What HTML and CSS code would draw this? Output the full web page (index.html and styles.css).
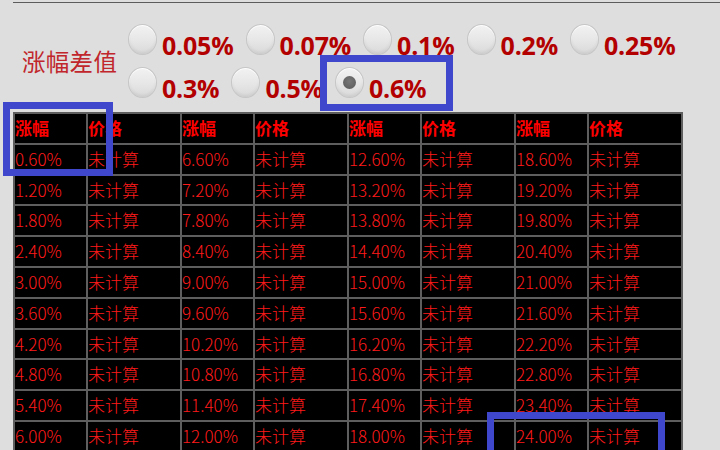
FILE: index.html
```html
<!DOCTYPE html>
<html lang="zh-CN">
<head>
<meta charset="utf-8">
<title>涨幅差值</title>
<link rel="stylesheet" href="styles.css">
</head>
<body>
<div class="topline"></div>
<div class="header">
  <div class="title">涨幅差值</div>
  <div class="radios">
    <label class="radio"><span class="dot"></span><span class="rlabel">0.05%</span></label>
    <label class="radio"><span class="dot"></span><span class="rlabel">0.07%</span></label>
    <label class="radio"><span class="dot"></span><span class="rlabel">0.1%</span></label>
    <label class="radio"><span class="dot"></span><span class="rlabel">0.2%</span></label>
    <label class="radio"><span class="dot"></span><span class="rlabel">0.25%</span></label>
    <label class="radio"><span class="dot"></span><span class="rlabel">0.3%</span></label>
    <label class="radio"><span class="dot"></span><span class="rlabel">0.5%</span></label>
    <label class="radio"><span class="dot checked"></span><span class="rlabel">0.6%</span></label>
  </div>
</div>
<div class="grid">
  <div class="c h">涨幅</div><div class="c h">价格</div><div class="c h">涨幅</div><div class="c h">价格</div><div class="c h">涨幅</div><div class="c h">价格</div><div class="c h">涨幅</div><div class="c h">价格</div>
  <div class="c">0.60%</div><div class="c">未计算</div><div class="c">6.60%</div><div class="c">未计算</div><div class="c">12.60%</div><div class="c">未计算</div><div class="c">18.60%</div><div class="c">未计算</div>
  <div class="c">1.20%</div><div class="c">未计算</div><div class="c">7.20%</div><div class="c">未计算</div><div class="c">13.20%</div><div class="c">未计算</div><div class="c">19.20%</div><div class="c">未计算</div>
  <div class="c">1.80%</div><div class="c">未计算</div><div class="c">7.80%</div><div class="c">未计算</div><div class="c">13.80%</div><div class="c">未计算</div><div class="c">19.80%</div><div class="c">未计算</div>
  <div class="c">2.40%</div><div class="c">未计算</div><div class="c">8.40%</div><div class="c">未计算</div><div class="c">14.40%</div><div class="c">未计算</div><div class="c">20.40%</div><div class="c">未计算</div>
  <div class="c">3.00%</div><div class="c">未计算</div><div class="c">9.00%</div><div class="c">未计算</div><div class="c">15.00%</div><div class="c">未计算</div><div class="c">21.00%</div><div class="c">未计算</div>
  <div class="c">3.60%</div><div class="c">未计算</div><div class="c">9.60%</div><div class="c">未计算</div><div class="c">15.60%</div><div class="c">未计算</div><div class="c">21.60%</div><div class="c">未计算</div>
  <div class="c">4.20%</div><div class="c">未计算</div><div class="c">10.20%</div><div class="c">未计算</div><div class="c">16.20%</div><div class="c">未计算</div><div class="c">22.20%</div><div class="c">未计算</div>
  <div class="c">4.80%</div><div class="c">未计算</div><div class="c">10.80%</div><div class="c">未计算</div><div class="c">16.80%</div><div class="c">未计算</div><div class="c">22.80%</div><div class="c">未计算</div>
  <div class="c">5.40%</div><div class="c">未计算</div><div class="c">11.40%</div><div class="c">未计算</div><div class="c">17.40%</div><div class="c">未计算</div><div class="c">23.40%</div><div class="c">未计算</div>
  <div class="c">6.00%</div><div class="c">未计算</div><div class="c">12.00%</div><div class="c">未计算</div><div class="c">18.00%</div><div class="c">未计算</div><div class="c">24.00%</div><div class="c">未计算</div>
</div>
<div class="mark mark-a"></div>
<div class="mark mark-b"></div>
<div class="mark mark-c"></div>
</body>
</html>
```
FILE: styles.css
```css
html, body {
  margin: 0;
  padding: 0;
  background: #dedede;
  overflow: hidden;
  width: 720px;
  height: 450px;
}
body {
  position: relative;
  font-family: "Noto Sans CJK SC", "Noto Sans", sans-serif;
}
.topline {
  margin: 2px 0 0 13px;
  height: 1px;
  background: #5c5c5c;
}
.header {
  display: flex;
  align-items: center;
  padding: 19px 0 0 22px;
  height: 90px;
}
.title {
  width: 106px;
  font-size: 23.5px;
  color: #c0262c;
  margin-top: -12px;
  letter-spacing: 0.3px;
}
.radios {
  width: 570px;
  display: flex;
  flex-wrap: wrap;
  column-gap: 12px;
  align-content: flex-start;
  height: 86px;
}
.radio {
  display: flex;
  align-items: flex-start;
  gap: 5px;
  height: 43px;
}
.dot {
  width: 29px;
  height: 31px;
  border-radius: 50%;
  box-sizing: border-box;
  border: 1px solid #c6c6c6;
  background: linear-gradient(180deg, #f2f2f2 0%, #e6e6e6 55%, #d9d9d9 100%);
  box-shadow: inset 0 1px 1px #ffffff, inset 0 -2px 3px rgba(0, 0, 0, 0.06);
  position: relative;
  flex: none;
}
.dot.checked::after {
  content: "";
  position: absolute;
  left: 7px;
  top: 8px;
  width: 13px;
  height: 13px;
  border-radius: 50%;
  background: radial-gradient(circle at 50% 40%, #777, #595959);
}
.rlabel {
  font-family: "Open Sans", "Noto Sans", sans-serif;
  font-weight: bold;
  font-size: 25px;
  line-height: 30px;
  margin-top: 6px;
  color: #b30000;
  letter-spacing: -0.2px;
}
.grid {
  margin: 0 0 0 13px;
  width: 670px;
  box-sizing: border-box;
  display: grid;
  grid-template-columns: 71px 92px 71px 92px 71px 92px 71px 92px;
  grid-auto-rows: 28.8px;
  gap: 2px;
  padding: 2px;
  background: #5e5e5e;
}
.c {
  background: #000;
  color: #ff1a1a;
  font-size: 17px;
  font-weight: 300;
  line-height: 28.8px;
  padding-left: 0;
  white-space: nowrap;
  overflow: hidden;
}
.c.h {
  font-weight: bold;
  color: #ff0000;
}
.mark {
  position: absolute;
  border: 7px solid #3f48cc;
  box-sizing: border-box;
}
.mark-a { left: 3px; top: 102px; width: 110px; height: 74px; }
.mark-b { left: 320px; top: 55px; width: 133px; height: 56px; }
.mark-c { left: 487px; top: 412px; width: 178px; height: 60px; }
```
